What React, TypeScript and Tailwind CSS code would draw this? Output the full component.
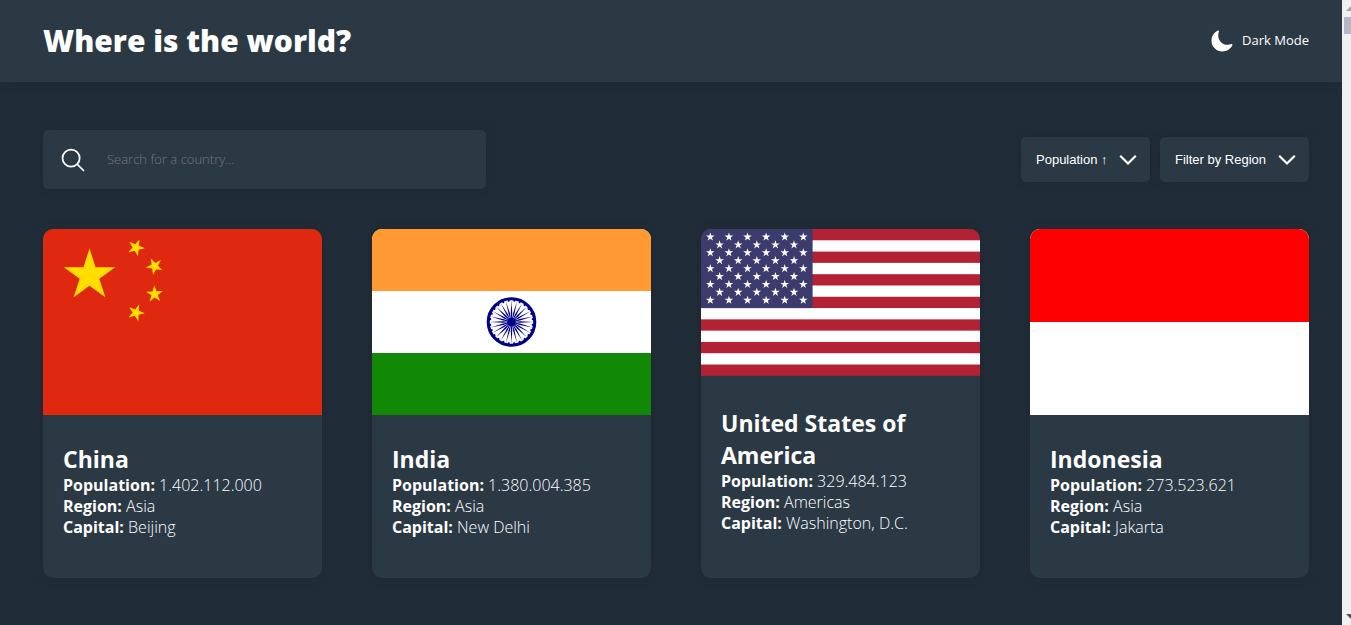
import type { ReactNode } from "react";
import { IoMoon, IoSearchOutline } from "react-icons/io5";

function starPoints(cx: number, cy: number, r: number, turn = 0): string {
  const points: string[] = [];
  for (let i = 0; i < 10; i++) {
    const radius = i % 2 === 0 ? r : r * 0.382;
    const angle = ((i * 36 - 90 + turn) * Math.PI) / 180;
    points.push(`${(cx + radius * Math.cos(angle)).toFixed(2)},${(cy + radius * Math.sin(angle)).toFixed(2)}`);
  }
  return points.join(" ");
}

function ChinaFlag() {
  return (
    <svg viewBox="0 0 300 200" className="block w-full" role="img" aria-label="Flag of China">
      <rect width="300" height="200" fill="#de2910" />
      <g fill="#ffde00">
        <polygon points={starPoints(50, 50, 29)} />
        <polygon points={starPoints(100, 20, 9.5, 23)} />
        <polygon points={starPoints(120, 40, 9.5, -26)} />
        <polygon points={starPoints(120, 70, 9.5, -2)} />
        <polygon points={starPoints(100, 90, 9.5, 21)} />
      </g>
    </svg>
  );
}

const spokes = Array.from({ length: 24 }, (_, i) => i * 15);

function IndiaFlag() {
  return (
    <svg viewBox="0 0 225 150" className="block w-full" role="img" aria-label="Flag of India">
      <rect width="225" height="150" fill="#ffffff" />
      <rect width="225" height="50" fill="#ff9933" />
      <rect y="100" width="225" height="50" fill="#128807" />
      <g transform="translate(112.5 75)" fill="#000088">
        <circle r="18.75" fill="none" stroke="#000088" strokeWidth="2.5" />
        <circle r="3.5" />
        {spokes.map((angle) => (
          <g key={angle} transform={`rotate(${angle})`}>
            <path d="M0 17.5 L0.6 7 L0.2 2 L-0.2 2 L-0.6 7 Z" />
            <circle cx="0" cy="17.3" r="0.875" transform="rotate(7.5)" />
          </g>
        ))}
      </g>
    </svg>
  );
}

const unionStars = Array.from({ length: 9 }, (_, row) =>
  Array.from({ length: row % 2 === 0 ? 6 : 5 }, (_, col) => ({
    x: (494 / 12) * (col * 2 + (row % 2 === 0 ? 1 : 2)),
    y: 35 * (row + 1),
  })),
).flat();

function UsaFlag() {
  return (
    <svg viewBox="0 0 1235 650" className="block w-full" role="img" aria-label="Flag of the United States of America">
      <rect width="1235" height="650" fill="#b22234" />
      {[1, 3, 5, 7, 9, 11].map((stripe) => (
        <rect key={stripe} y={stripe * 50} width="1235" height="50" fill="#ffffff" />
      ))}
      <rect width="494" height="350" fill="#3c3b6e" />
      <g fill="#ffffff">
        {unionStars.map((star) => (
          <polygon key={`${star.x}-${star.y}`} points={starPoints(star.x, star.y, 20)} />
        ))}
      </g>
    </svg>
  );
}

function IndonesiaFlag() {
  return (
    <svg viewBox="0 0 300 200" className="block w-full" role="img" aria-label="Flag of Indonesia">
      <rect width="300" height="200" fill="#ffffff" />
      <rect width="300" height="100" fill="#ff0000" />
    </svg>
  );
}

interface Country {
  name: string;
  population: string;
  region: string;
  capital: string;
  flag: ReactNode;
}

const countries: Country[] = [
  { name: "China", population: "1.402.112.000", region: "Asia", capital: "Beijing", flag: <ChinaFlag /> },
  { name: "India", population: "1.380.004.385", region: "Asia", capital: "New Delhi", flag: <IndiaFlag /> },
  {
    name: "United States of America",
    population: "329.484.123",
    region: "Americas",
    capital: "Washington, D.C.",
    flag: <UsaFlag />,
  },
  { name: "Indonesia", population: "273.523.621", region: "Asia", capital: "Jakarta", flag: <IndonesiaFlag /> },
];

function Fact({ label, value }: { label: string; value: string }) {
  return (
    <p className="leading-[21px]">
      <strong className="font-bold">{label}:</strong> {value}
    </p>
  );
}

function CountryCard({ country }: { country: Country }) {
  return (
    <article className="flex min-h-[349px] flex-col overflow-hidden rounded-[10px] bg-[#2b3945] shadow-[0_0_12px_rgba(0,0,0,0.1)]">
      {country.flag}
      <div className="flex flex-1 flex-col justify-center px-5 pb-3 text-base font-light">
        <h2 className="text-[23px] leading-8 font-bold">{country.name}</h2>
        <Fact label="Population" value={country.population} />
        <Fact label="Region" value={country.region} />
        <Fact label="Capital" value={country.capital} />
      </div>
    </article>
  );
}

function Picker({ label, options }: { label: string; options: string[] }) {
  return (
    <div className="relative">
      <select
        aria-label={label}
        className="h-[45px] cursor-pointer appearance-none rounded-[5px] bg-[#2b3945] pr-[42px] pl-[15px] font-['Liberation_Sans',sans-serif] text-[13px] font-medium text-white shadow-[0_0_12px_rgba(0,0,0,0.1)]"
      >
        {options.map((option) => (
          <option key={option}>{option}</option>
        ))}
      </select>
      <svg
        viewBox="0 0 26 26"
        className="pointer-events-none absolute inset-y-0 right-[9px] my-auto size-[26px]"
        fill="none"
        stroke="currentColor"
        strokeWidth="2.2"
        aria-hidden
      >
        <path d="M5.2 8.7 L13 16.5 L20.8 8.7" />
      </svg>
    </div>
  );
}

export default function App() {
  return (
    <div className="flex min-h-screen bg-[#202c37] font-['Open_Sans','Noto_Sans',sans-serif] text-white">
      <div className="min-w-0 flex-1">
        <header className="flex h-[82px] items-center justify-between bg-[#2b3945] pr-[33px] pl-[43px] shadow-[0_0_12px_rgba(0,0,0,0.1)]">
          <h1 className="text-[30px] leading-10 font-extrabold">Where is the world?</h1>
          <button type="button" className="flex cursor-pointer items-center gap-2 text-[13px]">
            <IoMoon className="size-6" aria-hidden />
            Dark Mode
          </button>
        </header>

        <main className="pt-12 pr-[33px] pb-12 pl-[43px]">
          <div className="flex flex-wrap items-center justify-between gap-4">
            <label className="flex h-[59px] w-[35%] min-w-[280px] items-center gap-5 rounded-[5px] bg-[#2b3945] px-4 shadow-[0_0_12px_rgba(0,0,0,0.1)]">
              <IoSearchOutline className="size-7 shrink-0" aria-hidden />
              <input
                type="text"
                aria-label="Search for a country"
                placeholder="Search for a country..."
                className="min-w-0 flex-1 bg-transparent text-[13px] font-light outline-none placeholder:text-[#757585]"
              />
            </label>
            <div className="flex gap-2.5">
              <Picker label="Sort by" options={["Population ↑", "Population ↓"]} />
              <Picker
                label="Filter by region"
                options={["Filter by Region", "Africa", "Americas", "Asia", "Europe", "Oceania"]}
              />
            </div>
          </div>

          <section className="mt-10 grid grid-cols-[repeat(auto-fill,minmax(260px,1fr))] gap-[50px]" aria-label="Countries">
            {countries.map((country) => (
              <CountryCard key={country.name} country={country} />
            ))}
          </section>
        </main>
      </div>

      <div className="sticky top-0 flex h-screen w-[9px] shrink-0 flex-col overflow-hidden bg-[#f0f0f0]" aria-hidden>
        <svg viewBox="0 0 9 17" className="h-[17px] w-[9px] shrink-0">
          <path d="M4 11 L9 6 V11 Z" fill="#a3a3a8" />
        </svg>
        <div className="ml-0.5 h-[17px] bg-[#b5b7c4]" />
        <svg viewBox="0 0 9 17" className="mt-auto h-[17px] w-[9px] shrink-0">
          <path d="M4 6 H9 V11 Z" fill="#505050" />
        </svg>
      </div>
    </div>
  );
}
